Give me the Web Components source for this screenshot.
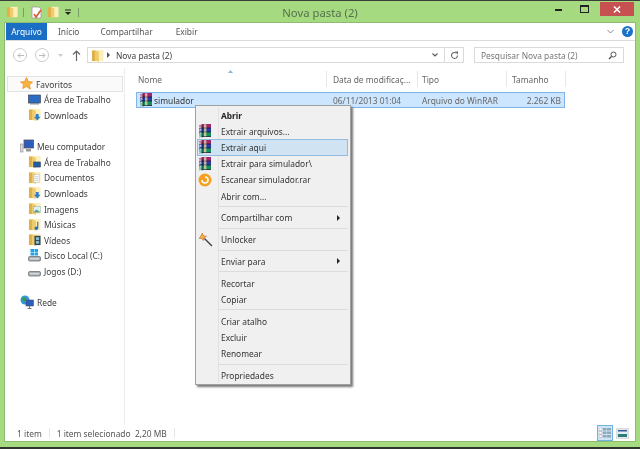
<!DOCTYPE html>
<html lang="pt">
<head>
<meta charset="utf-8">
<title>Nova pasta (2)</title>
<style>
html, body { margin: 0; padding: 0; background: #a6da81; }
body { width: 640px; height: 449px; overflow: hidden; font: 8.4px "Noto Sans", sans-serif; color: #3c3c3c; }
</style>
</head>
<body>
<explorer-window>
  <title-bar slot="title">Nova pasta (2)</title-bar>
  <ribbon-tabs slot="ribbon"></ribbon-tabs>
  <address-bar slot="address"></address-bar>
  <nav-pane slot="nav"></nav-pane>
  <file-list slot="list"></file-list>
  <status-bar slot="status"></status-bar>
  <context-menu slot="menu"></context-menu>
</explorer-window>

<script>
// small svg helpers, shared by every component
const folder = (s = 14, extra = '') => `<svg width="${s}" height="${s}" viewBox="0 0 14 14" style="flex:none;display:block">
  <path d="M1 1.500h4.500V13H1z" fill="#e0b04a"/><path d="M5 1h8.500v12H5z" fill="#fcefb9"/><path d="M4.500 1.500 8.500 3v11l-4-1.500z" fill="#f0cb6c"/>${extra}</svg>`;

const rar = (s = 14) => `<svg width="${s}" height="${s}" viewBox="0 0 14 14" style="flex:none;display:block">
  <path d="M1 1.500 4.500 0H13v4H4L1 5z" fill="#a3246f"/>
  <path d="M1 5l3-1h9v4H4L1 9z" fill="#2d3aa8"/>
  <path d="M1 9l3-1h9v4.500H4L1 13.500z" fill="#14905f"/>
  <path d="M1 2.500 4 1.500M1 3.800 4 2.800M1 6 4 5M1 7.300 4 6.300M1 10 4 9M1 11.300 4 10.300M1 12.600l3-1" stroke="#fff" stroke-width=".7"/>
  <path d="M4 1v12.500M4 4h9M4 8h9M4 12.500h9" stroke="#15202a" stroke-width=".8"/>
  <path d="M6 .3h2.400v3.400H6zM6 4.300h2.400v3.400H6zM6 8.300h2.400v3.900H6z" fill="#d9cfa0" opacity=".85"/></svg>`;

const overlays = {
  desk: '<rect x="6" y="7.500" width="7.500" height="5.500" fill="#1e5fa8" stroke="#334" stroke-width=".5"/>',
  docs: '<rect x="6.500" y="4" width="6" height="8" fill="#fdfdfd" stroke="#bbb" stroke-width=".5"/><path d="M7.500 6h4M7.500 8h4M7.500 10h4" stroke="#9fb4c4" stroke-width=".6"/>',
  down: '<path d="M8.500 6.500h3v3h2L10 13.500 6.500 9.500h2z" fill="#2a7ed3"/>',
  pics: '<rect x="6" y="5" width="7.500" height="6" fill="#dff0f5" stroke="#8aa" stroke-width=".5"/><path d="M6 11l3-3 4.500 3z" fill="#5a9a8a"/>',
  music: '<path d="M10.500 4v7" stroke="#2a6fb8" stroke-width="1.200"/><circle cx="9" cy="11" r="1.900" fill="#2a6fb8"/>',
  video: '<rect x="7" y="3" width="6.500" height="10" fill="#35404a"/><rect x="8.500" y="4.500" width="3.500" height="3" fill="#7fc0d8"/><rect x="8.500" y="8.500" width="3.500" height="3" fill="#7fc0d8"/>'
};

class ExplorerWindow extends HTMLElement {
  constructor() {
    super();
    const host = this.attachShadow({ mode: 'open' });
    host.innerHTML = `
      <style>
        :host { display: block; position: relative; width: 640px; height: 449px; background: #a6da81; box-sizing: border-box;
                border-top: 1px solid #3b3f38; border-bottom: 2px solid #30342e; filter: blur(.25px); }
        .body { margin: 0 5px 0 5px; height: 418px; background: #fff; display: flex; flex-direction: column;
                outline: 1px solid #8dbb70; }
        .main { flex: 1; display: flex; min-height: 0; }
      </style>
      <slot name="title"></slot>
      <div class="body">
        <slot name="ribbon"></slot>
        <slot name="address"></slot>
        <div class="main"><slot name="nav"></slot><slot name="list"></slot></div>
        <slot name="status"></slot>
      </div>
      <slot name="menu"></slot>
    `;
  }
}

class TitleBar extends HTMLElement {
  constructor() {
    super();
    const host = this.attachShadow({ mode: 'open' });
    host.innerHTML = `
      <style>
        :host { display: flex; align-items: flex-start; height: 22px; box-sizing: border-box; padding-left: 6px; position: relative; }
        .qat { display: flex; align-items: center; height: 22px; }
        .bar { width: 1px; height: 9px; background: #7d9d67; }
        .name { position: absolute; left: 0; right: 0; top: 3px; text-align: center; font-size: 11.3px; line-height: 17px; color: #56704b; padding-left: 0; }
        .ctl { margin-left: auto; display: flex; margin-right: 6px; align-items: flex-start; margin-top: 1px; }
        .btn { width: 28px; height: 14px; display: flex; align-items: center; justify-content: center; }
        .close { width: 34px; background: #c75050; margin-left: 3px; }
      </style>
      <div class="qat">
        ${folder(12)}
        <span class="bar" style="margin-left:5px"></span>
        <svg style="margin-left:7px" width="12" height="13" viewBox="0 0 12 13"><path d="M1 1h7l2 2v9H1z" fill="#fff" stroke="#999" stroke-width=".8"/><path d="M3 8l2 3 5-7" fill="none" stroke="#d9582b" stroke-width="1.600"/></svg>
        <span style="margin-left:4px">${folder(12)}</span>
        <svg style="margin-left:6px" width="6" height="7" viewBox="0 0 6 7"><path d="M0 1h6" stroke="#222"/><path d="M0 3l3 3 3-3z" fill="#222"/></svg>
        <span class="bar" style="margin-left:7px"></span>
      </div>
      <div class="name"><slot></slot></div>
      <div class="ctl">
        <div class="btn"><svg width="7" height="3"><rect width="7" height="2" y="1" fill="#222"/></svg></div>
        <div class="btn" style="width:25px"><svg width="9" height="8"><rect x=".5" y=".5" width="8" height="7" fill="none" stroke="#222"/><rect width="9" height="2" fill="#222"/></svg></div>
        <div class="btn close"><svg width="8" height="7" viewBox="0 0 8 7"><path d="M1 .5l6 6M7 .5l-6 6" stroke="#fff" stroke-width="1.500"/></svg></div>
      </div>
    `;
  }
}

class RibbonTabs extends HTMLElement {
  constructor() {
    super();
    const host = this.attachShadow({ mode: 'open' });
    host.innerHTML = `
      <style>
        :host { display: flex; align-items: center; height: 18px; box-sizing: border-box; border-bottom: 1px solid #dcdcdc; padding-left: 1px; }
        .file { width: 41px; height: 17px; background: #1a6fc4; color: #fff; display: flex; align-items: center; justify-content: center; }
        .tab { color: #555; }
        .help { margin-left: auto; display: flex; align-items: center; gap: 8px; margin-right: 2px; }
        .q { width: 11px; height: 11px; border-radius: 50%; background: #1a73c9; color: #fff; font: bold 9px/11px "Liberation Sans", sans-serif; text-align: center; }
      </style>
      <span class="file">Arquivo</span>
      <span class="tab" style="margin-left:11px">Início</span>
      <span class="tab" style="margin-left:21px">Compartilhar</span>
      <span class="tab" style="margin-left:23px">Exibir</span>
      <div class="help">
        <svg width="7" height="5" viewBox="0 0 7 5"><path d="M.5 1l3 3 3-3" fill="none" stroke="#888"/></svg>
        <span class="q">?</span>
      </div>
    `;
  }
}

class AddressBar extends HTMLElement {
  constructor() {
    super();
    const host = this.attachShadow({ mode: 'open' });
    host.innerHTML = `
      <style>
        :host { display: flex; align-items: center; height: 27px; box-sizing: border-box; padding: 1px 11px 0 8px; }
        .round { width: 14px; height: 14px; border-radius: 50%; border: 1px solid #ccc; box-sizing: border-box; display: flex; align-items: center; justify-content: center; }
        .box { height: 16px; box-sizing: border-box; border: 1px solid #dadada; display: flex; align-items: center; }
        .path { margin-left: 6px; width: 377px; }
        .search { margin-left: 10px; flex: 1; color: #777; padding-left: 6px; justify-content: space-between; padding-right: 6px; }
        .tri { margin: 0 6px 0 3px; width: 0; height: 0; border-left: 3px solid #555; border-top: 3px solid transparent; border-bottom: 3px solid transparent; }
        .end { margin-left: auto; display: flex; height: 100%; align-items: center; }
        .ref { width: 18px; height: 100%; border-left: 1px solid #dadada; display: flex; align-items: center; justify-content: center; }
      </style>
      <span class="round"><svg width="7" height="7" viewBox="0 0 7 7"><path d="M3.500 1 1 3.500 3.500 6M1 3.500h6" fill="none" stroke="#bbb"/></svg></span>
      <span class="round" style="margin-left:8px"><svg width="7" height="7" viewBox="0 0 7 7"><path d="M3.500 1 6 3.500 3.500 6M6 3.500H0" fill="none" stroke="#bbb"/></svg></span>
      <svg style="margin-left:9px" width="5" height="3"><path d="M0 0h5L2.500 3z" fill="#ccc"/></svg>
      <svg style="margin-left:9px" width="9" height="11" viewBox="0 0 9 11"><path d="M4.500 1v10M1 4.500l3.500-3.500 3.500 3.500" fill="none" stroke="#666" stroke-width="1.200"/></svg>
      <div class="box path">
        <span style="margin-left:3px">${folder(13)}</span>
        <span class="tri"></span>
        <span>Nova pasta (2)</span>
        <div class="end">
          <svg style="margin-right:6px" width="6" height="4" viewBox="0 0 6 4"><path d="M.5.500l2.500 2.500 2.500-2.500" fill="none" stroke="#555" stroke-width="1.100"/></svg>
          <span class="ref"><svg width="9" height="9" viewBox="0 0 9 9"><path d="M7.500 4.500a3 3 0 1 1-1-2.300" fill="none" stroke="#666" stroke-width="1.100"/><path d="M5 .5h3v3z" fill="#666"/></svg></span>
        </div>
      </div>
      <div class="box search">
        <span>Pesquisar Nova pasta (2)</span>
        <svg width="9" height="9" viewBox="0 0 9 9"><circle cx="5.500" cy="3.500" r="2.500" fill="none" stroke="#555"/><path d="M3.500 5.500 1 8" stroke="#555" stroke-width="1.400"/></svg>
      </div>
    `;
  }
}

class NavPane extends HTMLElement {
  constructor() {
    super();
    const host = this.attachShadow({ mode: 'open' });
    const row = (icon, text, sub) => `<div class="row ${sub ? 'sub' : ''}">${icon}<span>${text}</span></div>`;
    const drive = (win) => `<svg width="13" height="13" viewBox="0 0 13 13" style="flex:none">
      ${win ? '<path d="M2.500 0h3.500v3H2.500zM6.500 0H10v3H6.500zM2.500 3.500h3.500v3H2.500zM6.500 3.500H10v3H6.500z" fill="#1fa2e8"/>' : ''}
      <rect x=".5" y="7.500" width="12" height="4.500" rx="1.200" fill="#a9aeb2" stroke="#5c6468" stroke-width=".7"/><rect x="2" y="9" width="9" height="1.500" fill="#d4d8da"/></svg>`;
    const pc = `<svg width="14" height="14" viewBox="0 0 14 14" style="flex:none"><rect x="4" y="1" width="9.500" height="8" fill="#2c5cc0" stroke="#555" stroke-width=".8"/><rect x=".5" y="5" width="2.500" height="8" fill="#ddd" stroke="#777" stroke-width=".5"/><path d="M6 10h5v2.500H6z" fill="#999"/></svg>`;
    const globe = `<svg width="14" height="14" viewBox="0 0 14 14" style="flex:none"><circle cx="5" cy="5" r="4.500" fill="#2f9ad6"/><path d="M2.500 2l3.500 1-1 3.500-2.500-1z" fill="#3f9a3f"/><rect x="6" y="5" width="7.500" height="6" fill="#2c5cc0" stroke="#555" stroke-width=".6"/><path d="M9.500 11v2.500M7.500 13.500h4" stroke="#777"/></svg>`;
    const star = `<svg width="13" height="13" viewBox="0 0 12 12" style="flex:none"><path d="M6 .5l1.700 3.600 3.900.5-2.900 2.700.8 3.900L6 8.800l-3.500 1.900.8-3.900L.4 4.600l3.900-.5z" fill="#f7b23c" stroke="#e2891a" stroke-width=".6"/></svg>`;
    const desk = `<svg width="13" height="13" viewBox="0 0 13 13" style="flex:none"><rect x=".5" y="2" width="12" height="8" fill="#2a6cc4" stroke="#445" stroke-width=".7"/><rect x="2" y="10" width="9" height="1.500" fill="#8a94a0"/></svg>`;
    host.innerHTML = `
      <style>
        :host { display: block; width: 120px; flex: none; box-sizing: border-box; border-right: 1px solid #ececec; padding: 8px 0 0 2px; color: #3c3c3c; }
        .row { display: flex; align-items: center; gap: 3px; height: 15.6px; padding-left: 13px; white-space: nowrap; }
        .row span { position: relative; top: .6px; }
        .row.sub { padding-left: 21px; gap: 3px; }
        .fav { border: 1px solid #e2e2e2; background: #fafafa; box-sizing: border-box; width: 116px; padding-left: 12px; }
        .gap { height: 15.600px; }
      </style>
      <div class="row fav">${star}<span>Favoritos</span></div>
      ${row(desk, 'Área de Trabalho', 1)}
      ${row(folder(13, overlays.down), 'Downloads', 1)}
      <div class="gap"></div>
      ${row(pc, 'Meu computador')}
      ${row(folder(13, overlays.desk), 'Área de Trabalho', 1)}
      ${row(folder(13, overlays.docs), 'Documentos', 1)}
      ${row(folder(13, overlays.down), 'Downloads', 1)}
      ${row(folder(13, overlays.pics), 'Imagens', 1)}
      ${row(folder(13, overlays.music), 'Músicas', 1)}
      ${row(folder(13, overlays.video), 'Vídeos', 1)}
      ${row(drive(true), 'Disco Local (C:)', 1)}
      ${row(drive(false), 'Jogos (D:)', 1)}
      <div class="gap"></div>
      ${row(globe, 'Rede')}
    `;
  }
}

class FileList extends HTMLElement {
  constructor() {
    super();
    const host = this.attachShadow({ mode: 'open' });
    host.innerHTML = `
      <style>
        :host { display: block; flex: 1; min-width: 0; position: relative; padding: 3px 0 0 11px; color: #666; }
        .head { display: grid; grid-template-columns: 191px 91px 89px 59px; height: 16px; align-items: stretch; }
        .head span { display: flex; align-items: center; white-space: nowrap; overflow: hidden; border-right: 1px solid #e8e8e8; }
        .sort { position: absolute; left: 103px; top: 2px; }
        .sel { margin-top: 5px; width: 429px; height: 16px; box-sizing: border-box; background: #cce6ff; border: 1px solid #7eb4ea;
               display: grid; grid-template-columns: 190px 90px 88px 56px; align-items: center; }
        .name { display: flex; align-items: center; gap: 1px; color: #333; padding-left: 2px; }
        .sel span.r { text-align: right; }
      </style>
      <svg class="sort" width="5" height="3"><path d="M0 3 2.500 0 5 3z" fill="#8fb4d4"/></svg>
      <div class="head">
        <span style="padding-left:2px">Nome</span>
        <span style="padding-left:6px">Data de modificaç...</span>
        <span style="padding-left:4px">Tipo</span>
        <span style="padding-left:5px">Tamanho</span>
      </div>
      <div class="sel">
        <div class="name">${rar(14)}<span>simulador</span></div>
        <span style="padding-left:6px">06/11/2013 01:04</span>
        <span style="padding-left:5px">Arquivo do WinRAR</span>
        <span class="r">2.262 KB</span>
      </div>
    `;
  }
}

class StatusBar extends HTMLElement {
  constructor() {
    super();
    const host = this.attachShadow({ mode: 'open' });
    host.innerHTML = `
      <style>
        :host { display: flex; align-items: center; height: 16px; padding-left: 12px; color: #555; position: relative; }
        .sep { width: 1px; height: 10px; background: #e6e6e6; margin: 0 7px 0 7px; }
        .views { margin-left: auto; display: flex; align-items: center; gap: 3px; margin-right: 6px; }
        .on { width: 16px; height: 16px; box-sizing: border-box; background: #cce6f8; border: 1px solid #6fb4e0; display: flex; align-items: center; justify-content: center; }
        .off { width: 11px; height: 9px; background: #e4e4e4; border: 1px solid #ddd; display: flex; align-items: center; justify-content: center; }
      </style>
      <span>1 item</span><span class="sep"></span>
      <span>1 item selecionado&nbsp; 2,20 MB</span><span class="sep"></span>
      <div class="views">
        <span class="on"><svg width="12" height="10" viewBox="0 0 12 10"><path d="M0 0h3v2.500H0zM0 3.500h3V6H0zM0 7h3v2.500H0z" fill="#fff" stroke="#c77" stroke-width=".4"/><path d="M4 0h3.500v2.500H4zM8 0h4v2.500H8zM4 3.500h3.500V6H4zM8 3.500h4V6H8zM4 7h3.500v2.500H4zM8 7h4v2.500H8z" fill="#8fa8b8"/></svg></span>
        <span class="off"><svg width="9" height="7" viewBox="0 0 9 7"><rect width="9" height="7" fill="#dff0f5"/><path d="M0 4h9v3H0z" fill="#2f7a7a"/><path d="M0 0h9v1.500H0z" fill="#3a5a9a"/></svg></span>
      </div>
    `;
  }
}

class ContextMenu extends HTMLElement {
  constructor() {
    super();
    const host = this.attachShadow({ mode: 'open' });
    const item = (text, opt = {}) => `<div class="item ${opt.hot ? 'hot' : ''} ${opt.bold ? 'bold' : ''}">
        <span class="ico">${opt.icon || ''}</span><span class="txt">${text}</span>${opt.sub ? '<span class="arrow"></span>' : ''}</div>`;
    const sep = '<div class="sep"></div>';
    const scan = `<svg width="14" height="14" viewBox="0 0 14 14"><circle cx="7" cy="7" r="6.500" fill="#f5a11f"/><path d="M4 7a3 3 0 1 0 3-3" fill="none" stroke="#fff" stroke-width="1.500"/></svg>`;
    const wand = `<svg width="15" height="15" viewBox="0 0 14 14"><path d="M6 6l7 7" stroke="#444" stroke-width="1.300"/><path d="M4 1l1 2.500L8 4 5.500 5.500 5 8 3.500 6 1 6l1.500-2z" fill="#e8b93a" stroke="#c5532a" stroke-width=".5"/></svg>`;
    host.innerHTML = `
      <style>
        :host { display: block; position: absolute; left: 195px; top: 104px; width: 156px; box-sizing: border-box; background: #f0f0f0;
                border: 1px solid #a0a0a0; box-shadow: 2px 2px 2px #777; padding: 1px 2px 1px 1px; color: #333; }
        .wrap { background: linear-gradient(to right, transparent 21px, #e2e2e2 21px, #e2e2e2 22px, transparent 22px); }
        .item { display: flex; align-items: center; height: 16.2px; box-sizing: border-box; position: relative; }
        .ico { width: 16px; flex: none; display: flex; justify-content: center; align-items: center; margin-right: 8px; }
        .txt { white-space: nowrap; }
        .bold .txt { font-weight: 700; color: #222; }
        .hot { background: #cfe3f3; outline: 1px solid #8fbce0; outline-offset: -1px; }
        .arrow { position: absolute; right: 8px; top: 5px; border-left: 3px solid #222; border-top: 3px solid transparent; border-bottom: 3px solid transparent; }
        .sep { height: 5.600px; position: relative; }
        .sep::after { content: ""; position: absolute; left: 22px; right: 0; top: 2px; height: 1px; background: #dcdcdc; }
      </style>
      <div class="wrap">
        ${item('Abrir', { bold: 1 })}
        ${item('Extrair arquivos...', { icon: rar(14) })}
        ${item('Extrair aqui', { icon: rar(14), hot: 1 })}
        ${item('Extrair para simulador\\', { icon: rar(14) })}
        ${item('Escanear simulador.rar', { icon: scan })}
        ${item('Abrir com...')}
        ${sep}
        ${item('Compartilhar com', { sub: 1 })}
        ${sep}
        ${item('Unlocker', { icon: wand })}
        ${sep}
        ${item('Enviar para', { sub: 1 })}
        ${sep}
        ${item('Recortar')}
        ${item('Copiar')}
        ${sep}
        ${item('Criar atalho')}
        ${item('Excluir')}
        ${item('Renomear')}
        ${sep}
        ${item('Propriedades')}
      </div>
    `;
  }
}

customElements.define('explorer-window', ExplorerWindow);
customElements.define('title-bar', TitleBar);
customElements.define('ribbon-tabs', RibbonTabs);
customElements.define('address-bar', AddressBar);
customElements.define('nav-pane', NavPane);
customElements.define('file-list', FileList);
customElements.define('status-bar', StatusBar);
customElements.define('context-menu', ContextMenu);
</script>
</body>
</html>
